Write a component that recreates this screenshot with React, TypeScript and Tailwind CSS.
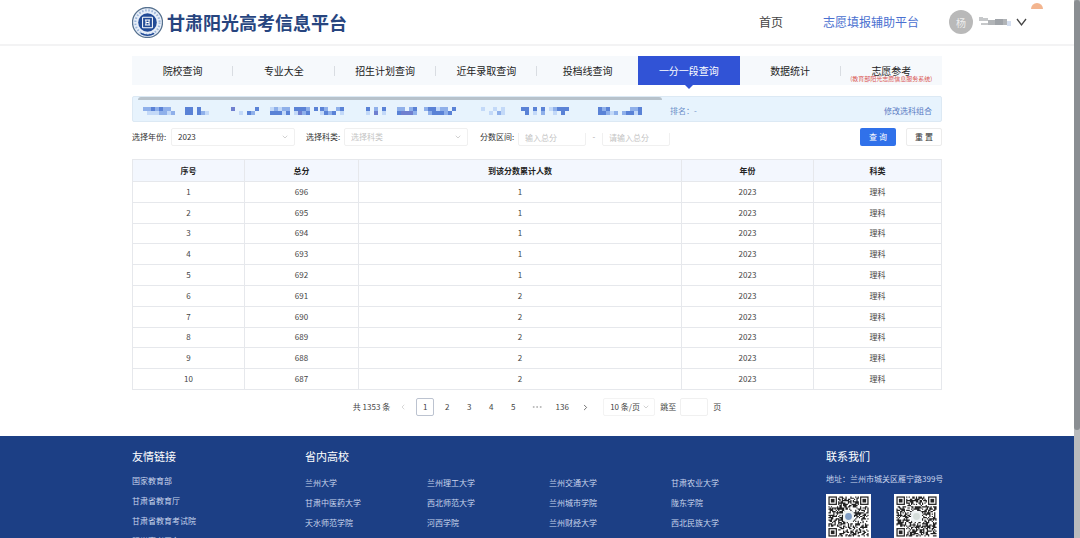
import { ChevronDown, ChevronLeft, ChevronRight, Ellipsis } from 'lucide-react'

const TABS = ['院校查询', '专业大全', '招生计划查询', '近年录取查询', '投档线查询', '一分一段查询', '数据统计', '志愿参考']
const ACTIVE_TAB = '一分一段查询'

const ROWS = [
  { score: 696, total: 1 },
  { score: 695, total: 1 },
  { score: 694, total: 1 },
  { score: 693, total: 1 },
  { score: 692, total: 1 },
  { score: 691, total: 2 },
  { score: 690, total: 2 },
  { score: 689, total: 2 },
  { score: 688, total: 2 },
  { score: 687, total: 2 },
]

const FRIEND_LINKS = ['国家教育部', '甘肃省教育厅', '甘肃省教育考试院', '阳光高考平台']

const SCHOOLS = [
  '兰州大学', '兰州理工大学', '兰州交通大学', '甘肃农业大学',
  '甘肃中医药大学', '西北师范大学', '兰州城市学院', '陇东学院',
  '天水师范学院', '河西学院', '兰州财经大学', '西北民族大学',
]

// masked profile text: two rows of 4px cells per group
const MASK_COLORS: Record<string, string> = {
  l: '#c3d9f8',
  m: '#8fb0ea',
  d: '#5a82d6',
  p: '#6f7fcf',
}
const MASK_GROUPS = [
  { x: 0, top: 'mmdmdmm.', bottom: '.lllmmlm' },
  { x: 42, top: 'dd.d..', bottom: 'dd.dml' },
  { x: 88, top: 'p.....d', bottom: '..l.dm.' },
  { x: 127, top: 'lmlmm.dddm.d', bottom: 'dddld.lpmd..' },
  { x: 177, top: 'dm..md', bottom: 'ldmd.l' },
  { x: 223, top: 'd.m.d', bottom: 'l.p.l' },
  { x: 254, top: 'mm.md', bottom: 'dpppm' },
  { x: 281, top: 'mddlmm.d', bottom: '.mdddmd.' },
  { x: 338, top: 'l..l.l', bottom: '..l.ml' },
  { x: 378, top: 'dd.d.d.lmddd', bottom: '.d.l.m..l.d.' },
  { x: 455, top: 'dmd.....mmd', bottom: 'ddmlm.mddld' },
]

function Emblem() {
  return (
    <svg viewBox="0 0 60 60" className="size-[31px]" role="img" aria-label="甘肃阳光高考信息平台">
      <circle cx="30" cy="30" r="29" fill="#e7eef8" stroke="#56718f" strokeWidth="2.5" />
      <circle cx="30" cy="30" r="23.5" fill="none" stroke="#9db6da" strokeWidth="4" strokeDasharray="3 3.2" />
      <circle cx="30" cy="30" r="18" fill="#214a96" />
      <rect x="20.5" y="20" width="19" height="20" rx="1" fill="none" stroke="#fff" strokeWidth="2" />
      <path d="M25 25h10M25 35h10M27 25v10M33 25v10M27 30h6" stroke="#fff" strokeWidth="2" fill="none" />
      <path d="M17 51q13 7 26 0" stroke="#214a96" strokeWidth="3" fill="none" />
    </svg>
  )
}

function MaskedProfile() {
  return (
    <svg viewBox="0 0 500 8" className="h-2 w-[500px] shrink-0" shapeRendering="crispEdges" aria-hidden="true">
      {MASK_GROUPS.map(group =>
        [group.top, group.bottom].map((line, row) =>
          line.split('').map((c, i) =>
            c === '.' ? null : (
              <rect key={`${group.x}-${row}-${i}`} x={group.x + i * 4} y={row * 4} width="4" height="4" fill={MASK_COLORS[c]} />
            ),
          ),
        ),
      )}
    </svg>
  )
}

const QR_SIZE = 33

function inFinder(x: number, y: number) {
  const far = QR_SIZE - 8
  return (x < 8 && y < 8) || (x >= far && y < 8) || (x < 8 && y >= far)
}

function QrCode({ seed, label, center }: { seed: number; label: string; center: string }) {
  let state = seed
  let d = ''
  for (let y = 0; y < QR_SIZE; y++) {
    for (let x = 0; x < QR_SIZE; x++) {
      state = (state * 1103515245 + 12345) % 2147483648
      if (!inFinder(x, y) && state / 2147483648 > 0.48) d += `M${x} ${y}h1v1h-1z`
    }
  }
  const corners = [[0, 0], [QR_SIZE - 7, 0], [0, QR_SIZE - 7]]
  return (
    <svg viewBox="-2 -2 37 37" className="size-[45px] bg-white" role="img" aria-label={label}>
      <path d={d} fill="#222" />
      {corners.map(([x, y]) => (
        <g key={`${x}-${y}`}>
          <rect x={x + 0.5} y={y + 0.5} width="6" height="6" fill="none" stroke="#222" />
          <rect x={x + 2} y={y + 2} width="3" height="3" fill="#222" />
        </g>
      ))}
      <rect x="12" y="12" width="9" height="9" rx="2" fill="#eef2f3" />
      <circle cx="16.5" cy="16.5" r="2.8" fill={center} />
    </svg>
  )
}

function Header() {
  return (
    <header className="border-b-2 border-[#f3f3f4]">
      <div className="flex h-11 items-center pr-[45px] pl-[132px]">
        <a href="#" className="flex items-center gap-1">
          <Emblem />
          <span className="text-[18px] font-bold whitespace-nowrap text-[#27457f]">甘肃阳光高考信息平台</span>
        </a>
        <nav className="ml-auto flex items-center gap-10 text-[12px] whitespace-nowrap">
          <a href="#" className="text-[#444]">首页</a>
          <a href="#" className="text-[#4a70d0]">志愿填报辅助平台</a>
        </nav>
        <button type="button" aria-label="用户菜单" className="ml-[30px] flex items-center">
          <span className="flex size-6 items-center justify-center rounded-full bg-[#b9b9b9] text-[10px] text-[#eee]">杨</span>
          <svg viewBox="0 0 34 12" className="ml-[6px] h-3 w-[34px]" shapeRendering="crispEdges" aria-hidden="true">
            <path d="M0 1h4v4H0zM4 2h5v3H4zM2 7h8v2H2z" fill="#c6c8ca" />
            <path d="M9 4h7v5H9zM24 3h4v6h-4z" fill="#b1b4b7" />
            <path d="M16 3h8v6h-8z" fill="#9fa3a8" />
            <path d="M28 5h4v5h-4z" fill="#d5dff0" />
          </svg>
          <svg viewBox="0 0 16 16" className="size-4" fill="none" stroke="#444" strokeWidth="1.3" aria-hidden="true">
            <path d="M4 5l4.500 6L13 5" />
          </svg>
        </button>
      </div>
      <svg viewBox="0 0 12 6" className="absolute top-[3px] right-[37px] h-[6px] w-3" aria-hidden="true">
        <path d="M0 6a6 6 0 0 1 12 0z" fill="#f3b58f" />
      </svg>
    </header>
  )
}

function Tabs() {
  return (
    <nav className="grid h-[29px] grid-cols-8 bg-[#f6f9fc] text-[10px]">
      {TABS.map((tab, i) => {
        const active = tab === ACTIVE_TAB
        const divider = !active && TABS[i + 1] !== ACTIVE_TAB && i < TABS.length - 1
        return (
          <a
            key={tab}
            href="#"
            className={
              active
                ? 'relative flex items-center justify-center bg-[#3153d6] text-white'
                : 'relative flex items-center justify-center text-[#222]'
            }
          >
            {tab}
            {divider && <span className="absolute top-[10px] right-0 h-[10px] w-px bg-[#d9dde2]" />}
            {active && (
              <svg viewBox="0 0 10 5" className="absolute top-full left-1/2 h-1 w-[10px] -translate-x-1/2">
                <path d="M0 0h10L5 5z" fill="#3153d6" />
              </svg>
            )}
            {tab === '志愿参考' && (
              <span className="absolute inset-x-0 top-[19px] flex justify-center text-[6px] leading-[8px] whitespace-nowrap text-[#d9534f]">
                (教育部阳光志愿信息服务系统)
              </span>
            )}
          </a>
        )
      })}
    </nav>
  )
}

function Filters() {
  return (
    <form className="relative mt-[6px] flex h-[18px] items-center text-[8px] whitespace-nowrap text-[#333]">
      <label htmlFor="year" className="w-[39px]">选择年份:</label>
      <div className="relative">
        <select id="year" defaultValue="2023" className="h-[18px] w-[124px] appearance-none rounded-xs border border-[#f0f0f0] bg-white pl-[6px]">
          <option>2023</option>
        </select>
        <ChevronDown className="pointer-events-none absolute top-[5px] right-[6px] size-2 text-[#bbb]" />
      </div>
      <label htmlFor="kind" className="ml-[11px] w-[38px]">选择科类:</label>
      <div className="relative">
        <select id="kind" defaultValue="" className="h-[18px] w-[124px] appearance-none rounded-xs border border-[#f0f0f0] bg-white pl-[6px] text-[#c4c4c4]">
          <option value="">选择科类</option>
        </select>
        <ChevronDown className="pointer-events-none absolute top-[5px] right-[6px] size-2 text-[#bbb]" />
      </div>
      <label htmlFor="min" className="ml-3 w-[38px]">分数区间:</label>
      <input id="min" placeholder="输入总分" className="h-[18px] w-[68px] rounded-xs border border-[#f0f0f0] px-[6px] placeholder:text-[#c4c4c4]" />
      <span className="w-4 text-center text-[#aaa]">-</span>
      <input aria-label="最高分" placeholder="请输入总分" className="h-[18px] w-[68px] rounded-xs border border-[#f0f0f0] px-[6px] placeholder:text-[#c4c4c4]" />
      <span className="absolute -top-1 left-[346px] h-[9px] w-[194px] bg-white" />
      <button type="button" className="ml-auto h-[18px] w-9 rounded-xs bg-[#3071ea] text-white">查 询</button>
      <button type="reset" className="ml-[10px] h-[18px] w-9 rounded-xs border border-[#ececec]">重 置</button>
    </form>
  )
}

function ScoreTable() {
  return (
    <table className="mt-[13px] h-[231px] w-full table-fixed border-collapse border border-[#e6e8ec] text-center text-[8px] leading-[12px] text-[#444]">
      <colgroup>
        <col className="w-[112px]" />
        <col className="w-[114px]" />
        <col />
        <col className="w-[132px]" />
        <col className="w-[128px]" />
      </colgroup>
      <thead>
        <tr className="h-[22px] bg-[#f3f7fe] text-[#222]">
          {['序号', '总分', '到该分数累计人数', '年份', '科类'].map(h => (
            <th key={h} className="border border-[#e6e8ec] font-bold">{h}</th>
          ))}
        </tr>
      </thead>
      <tbody>
        {ROWS.map((row, i) => (
          <tr key={row.score}>
            <td className="border border-[#e6e8ec]">{i + 1}</td>
            <td className="border border-[#e6e8ec]">{row.score}</td>
            <td className="border border-[#e6e8ec]">{row.total}</td>
            <td className="border border-[#e6e8ec]">2023</td>
            <td className="border border-[#e6e8ec]">理科</td>
          </tr>
        ))}
      </tbody>
    </table>
  )
}

function Pagination() {
  return (
    <nav aria-label="分页" className="mt-2 flex h-[18px] items-center justify-center text-[8px] whitespace-nowrap text-[#444]">
      <span>共 1353 条</span>
      <div className="ml-1 flex items-center gap-1">
        <button type="button" aria-label="上一页" className="flex size-[18px] items-center justify-center text-[#c4c4c4]">
          <ChevronLeft className="size-2" />
        </button>
        {[1, 2, 3, 4, 5].map(n => (
          <button key={n} type="button" className={n === 1 ? 'size-[18px] rounded-xs border border-[#bcc3d0]' : 'size-[18px]'}>
            {n}
          </button>
        ))}
        <span className="flex w-[22px] justify-center text-[#b5b5b5]">
          <Ellipsis className="size-3" />
        </span>
        <button type="button" className="h-[18px] w-5">136</button>
        <button type="button" aria-label="下一页" className="flex size-[18px] items-center justify-center">
          <ChevronRight className="size-[9px]" />
        </button>
      </div>
      <div className="relative ml-[9px]">
        <select aria-label="每页条数" className="h-[18px] w-[52px] appearance-none rounded-xs border border-[#f3f3f3] bg-white pl-[6px]">
          <option>10 条/页</option>
        </select>
        <ChevronDown className="pointer-events-none absolute top-[5px] right-[5px] size-2 text-[#bbb]" />
      </div>
      <label htmlFor="jump" className="ml-[5px]">跳至</label>
      <input id="jump" className="mr-[5px] ml-1 h-[18px] w-7 rounded-xs border border-[#f0f0f0]" />
      <span>页</span>
    </nav>
  )
}

function Footer() {
  return (
    <footer className="mt-5 bg-[#1c3f85] pt-3 pb-8 text-[8px] text-[#c9d5ec]">
      <div className="mx-auto flex w-[810px] max-w-full">
        <section className="w-[173px]">
          <h2 className="text-[11px] leading-[16px] text-white">友情链接</h2>
          <ul className="mt-[7px]">
            {FRIEND_LINKS.map(name => (
              <li key={name} className="h-5 leading-[20px]"><a href="#">{name}</a></li>
            ))}
          </ul>
        </section>
        <section className="flex-1">
          <h2 className="text-[11px] leading-[16px] text-white">省内高校</h2>
          <ul className="mt-[9px] grid w-[488px] grid-cols-4">
            {SCHOOLS.map(name => (
              <li key={name} className="h-5 leading-[20px]"><a href="#">{name}</a></li>
            ))}
          </ul>
        </section>
        <section className="w-[116px] whitespace-nowrap">
          <h2 className="text-[11px] leading-[16px] text-white">联系我们</h2>
          <p className="mt-[5px] leading-[20px]">地址：兰州市城关区雁宁路399号</p>
          <div className="mt-[5px] flex gap-[23px]">
            <QrCode seed={7321} label="微信公众号二维码" center="#7f9cc4" />
            <QrCode seed={90417} label="移动端二维码" center="#d5ddda" />
          </div>
        </section>
      </div>
    </footer>
  )
}

export default function App() {
  return (
    <div className="flex h-screen overflow-hidden bg-white font-['Noto_Sans_CJK_SC',sans-serif]">
      <div className="min-w-0 flex-1">
        <Header />
        <main className="mx-auto w-[810px] max-w-full pt-[10px]">
          <Tabs />
          <div className="relative mt-[11px] flex h-[26px] items-center rounded-xs border border-[#dce9f4] bg-[#e7f3fd] pt-1 pr-[9px] pl-[10px] text-[8px] whitespace-nowrap">
            <span className="absolute top-0 left-[5px] h-[3px] w-[524px] rounded-t-full bg-[#b7c2cb]" />
            <MaskedProfile />
            <span className="ml-[27px] text-[#6b8fc9]">排名：-</span>
            <a href="#" className="ml-auto text-[#5b7cc4]">修改选科组合</a>
          </div>
          <Filters />
          <ScoreTable />
          <Pagination />
        </main>
        <Footer />
      </div>
      <div className="w-[6px] bg-[#b9bbbd]" aria-hidden="true">
        <div className="h-4/5 rounded-full bg-[#8a8e92]" />
      </div>
    </div>
  )
}
